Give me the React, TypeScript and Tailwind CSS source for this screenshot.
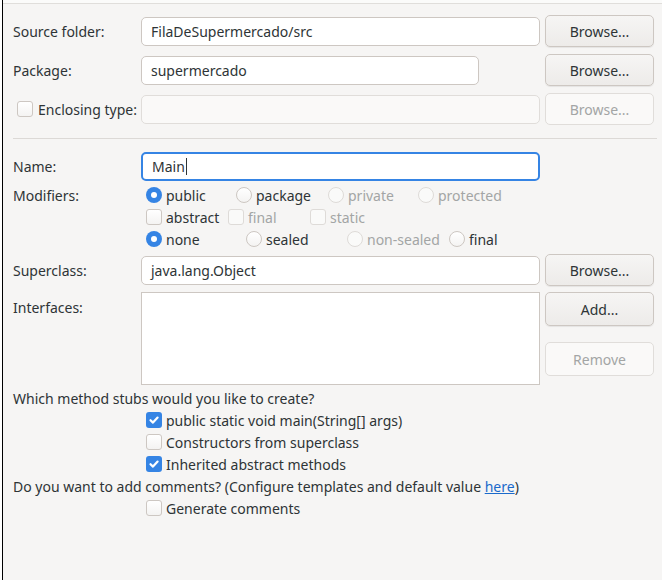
import type { ReactNode } from 'react';

const font = { fontFamily: '"Noto Sans", "Open Sans", sans-serif' };

function Button({ children, disabled }: { children: ReactNode; disabled?: boolean }) {
  return (
    <button
      type="button"
      className={
        disabled
          ? 'flex h-[32px] w-[109px] items-center justify-center rounded-[5px] border border-[#e0ddda] bg-[#faf9f8] text-[#a3a5a5]'
          : 'flex h-[32px] w-[109px] items-center justify-center rounded-[5px] border border-[#cdc7c2] bg-[linear-gradient(#f6f5f4,#edebe9)] text-[#2e3436] shadow-[0_1px_1px_rgba(0,0,0,0.07)]'
      }
    >
      {children}
    </button>
  );
}

function Field({ value, width = 'w-[399px]', disabled, focused }: { value?: string; width?: string; disabled?: boolean; focused?: boolean }) {
  const base = 'flex h-[29px] items-center rounded-[5px] px-[9px] ' + width + ' ';
  const look = disabled
    ? 'border border-[#e0ddda] bg-[#faf9f8]'
    : focused
      ? 'border-2 border-[#3584e4] bg-white px-[8px]'
      : 'border border-[#cdc7c2] bg-white';
  return (
    <div className={base + look}>
      <span>{value}</span>
      {focused && <span className="ml-[1px] h-[17px] w-px bg-[#2e3436]" />}
    </div>
  );
}

function Radio({ checked, disabled }: { checked?: boolean; disabled?: boolean }) {
  if (checked) {
    return (
      <span className="flex h-[16px] w-[16px] shrink-0 items-center justify-center rounded-full bg-[#3584e4]">
        <span className="h-[6px] w-[6px] rounded-full bg-white" />
      </span>
    );
  }
  return (
    <span
      className={
        disabled
          ? 'h-[16px] w-[16px] shrink-0 rounded-full border border-[#dedbd8] bg-[#fafaf9]'
          : 'h-[16px] w-[16px] shrink-0 rounded-full border border-[#cdc7c2] bg-[linear-gradient(#fff,#f4f3f2)]'
      }
    />
  );
}

function Check({ checked, disabled }: { checked?: boolean; disabled?: boolean }) {
  if (checked) {
    return (
      <span className="flex h-[16px] w-[16px] shrink-0 items-center justify-center rounded-[3px] bg-[#3584e4]">
        <svg width="12" height="12" viewBox="0 0 12 12">
          <path d="M2.5 6.2 L5 8.6 L9.6 3.6" fill="none" stroke="white" strokeWidth="2.2" strokeLinecap="round" strokeLinejoin="round" />
        </svg>
      </span>
    );
  }
  return (
    <span
      className={
        disabled
          ? 'h-[16px] w-[16px] shrink-0 rounded-[3px] border border-[#dedbd8] bg-[#fafaf9]'
          : 'h-[16px] w-[16px] shrink-0 rounded-[3px] border border-[#cdc7c2] bg-[linear-gradient(#fff,#f4f3f2)]'
      }
    />
  );
}

function Option({ kind, label, checked, disabled, width }: { kind: 'radio' | 'check'; label: string; checked?: boolean; disabled?: boolean; width?: string }) {
  return (
    <div className={'flex h-[22px] items-center gap-[4px] ' + (width ?? '')}>
      {kind === 'radio' ? <Radio checked={checked} disabled={disabled} /> : <Check checked={checked} disabled={disabled} />}
      <span className={disabled ? 'text-[#a3a5a5]' : ''}>{label}</span>
    </div>
  );
}

export default function App() {
  return (
    <div className="flex h-[580px] w-[662px] overflow-hidden bg-white text-[14px] text-[#2e3436]" style={font}>
      <div className="w-[2px] shrink-0 bg-white" />
      <div className="w-[1px] shrink-0 bg-black" />
      <div className="flex flex-1 flex-col bg-[#f6f5f4]">
        <div className="h-[4px] border-b border-[#e0dedb] bg-[#fbfbfa]" />

        <div className="flex flex-col gap-[7px] pl-[10px] pt-[11px]">
          <div className="flex items-center">
            <span className="w-[128px]">Source folder:</span>
            <Field value="FilaDeSupermercado/src" />
            <span className="ml-[5px]"><Button>Browse...</Button></span>
          </div>
          <div className="flex items-center">
            <span className="w-[128px]">Package:</span>
            <div className="w-[404px]"><Field value="supermercado" width="w-[338px]" /></div>
            <Button>Browse...</Button>
          </div>
          <div className="flex items-center">
            <div className="flex w-[128px] items-center gap-[5px] pl-[4px]">
              <Check />
              <span>Enclosing type:</span>
            </div>
            <Field disabled />
            <span className="ml-[5px]"><Button disabled>Browse...</Button></span>
          </div>
        </div>

        <div className="ml-[10px] mr-[5px] mt-[13px] h-px bg-[#dcd9d6]" />

        <div className="flex flex-col pl-[10px] pt-[13px]">
          <div className="flex items-center">
            <span className="w-[128px]">Name:</span>
            <Field value="Main" focused />
          </div>

          <div className="mt-[3px] flex">
            <span className="flex h-[22px] w-[133px] items-center">Modifiers:</span>
            <div className="flex flex-col">
              <div className="flex">
                <Option kind="radio" label="public" checked width="w-[90px]" />
                <Option kind="radio" label="package" width="w-[92px]" />
                <Option kind="radio" label="private" disabled width="w-[90px]" />
                <Option kind="radio" label="protected" disabled />
              </div>
              <div className="flex">
                <Option kind="check" label="abstract" width="w-[82px]" />
                <Option kind="check" label="final" disabled width="w-[82px]" />
                <Option kind="check" label="static" disabled />
              </div>
              <div className="flex">
                <Option kind="radio" label="none" checked width="w-[100px]" />
                <Option kind="radio" label="sealed" width="w-[101px]" />
                <Option kind="radio" label="non-sealed" disabled width="w-[102px]" />
                <Option kind="radio" label="final" />
              </div>
            </div>
          </div>

          <div className="mt-[4px] flex items-center">
            <span className="w-[128px]">Superclass:</span>
            <Field value="java.lang.Object" />
            <span className="ml-[5px]"><Button>Browse...</Button></span>
          </div>

          <div className="mt-[6px] flex">
            <span className="w-[128px] pt-[5px]">Interfaces:</span>
            <div className="h-[93px] w-[399px] border border-[#cdc7c2] bg-white" />
            <div className="ml-[5px] flex flex-col gap-[16px]">
              <div className="[&>button]:h-[34px]"><Button>Add...</Button></div>
              <div className="[&>button]:h-[34px]"><Button disabled>Remove</Button></div>
            </div>
          </div>

          <div className="mt-[2px] flex h-[22px] items-center">Which method stubs would you like to create?</div>
          <div className="pl-[133px]">
            <Option kind="check" label="public static void main(String[] args)" checked />
            <Option kind="check" label="Constructors from superclass" />
            <Option kind="check" label="Inherited abstract methods" checked />
          </div>
          <div className="flex h-[22px] items-center">
            Do you want to add comments? (Configure templates and default value&nbsp;
            <span className="text-[#1b6acb] underline">here</span>)
          </div>
          <div className="pl-[133px]">
            <Option kind="check" label="Generate comments" />
          </div>
        </div>
      </div>
    </div>
  );
}
